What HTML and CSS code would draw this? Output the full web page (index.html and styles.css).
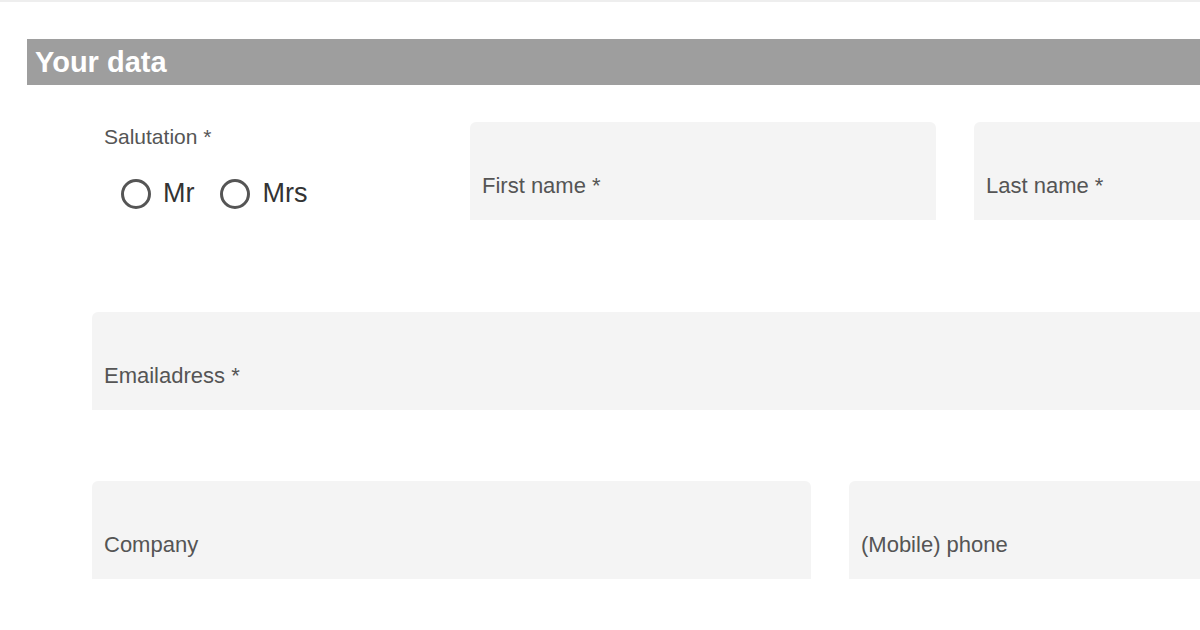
FILE: index.html
```html
<!DOCTYPE html>
<html lang="en">
<head>
    <meta charset="UTF-8">
    <meta name="viewport" content="width=device-width, initial-scale=1.0">
    <title>Your data</title>
    <link rel="stylesheet" href="styles.css">
</head>
<body>
    <div class="topline"></div>

    <section class="data-section">
        <h2 class="section-title">Your data</h2>

        <form class="data-form">
            <div class="row row-names">
                <div class="salutation">
                    <span class="salutation-label">Salutation *</span>
                    <div class="radios">
                        <label class="radio"><span class="radio-dot"></span>Mr</label>
                        <label class="radio"><span class="radio-dot"></span>Mrs</label>
                    </div>
                </div>
                <div class="field field-first">
                    <span class="field-label">First name *</span>
                </div>
                <div class="field field-last">
                    <span class="field-label">Last name *</span>
                </div>
            </div>

            <div class="row row-email">
                <div class="field field-full">
                    <span class="field-label">Emailadress *</span>
                </div>
            </div>

            <div class="row row-contact">
                <div class="field field-half">
                    <span class="field-label">Company</span>
                </div>
                <div class="field field-phone">
                    <span class="field-label">(Mobile) phone</span>
                </div>
            </div>
        </form>
    </section>
</body>
</html>
```

FILE: styles.css
```css
body {
    font-family: 'Liberation Sans', Arial, sans-serif;
    margin: 0;
    padding: 0;
    background: #fff;
    color: #555;
    height: 630px;
    overflow: hidden;
}

.topline {
    height: 2px;
    background-color: #eeeeee;
}

/* the screenshot is cut on the right, so the section runs to the edge */
.data-section {
    padding-top: 37px;
    padding-left: 27px;
}

.section-title {
    margin: 0;
    height: 46px;
    line-height: 46px;
    background-color: #9e9e9e;
    color: #fff;
    font-size: 29px;
    font-weight: bold;
    padding-left: 8px;
}

.data-form {
    margin-left: 65px;
}

.row {
    display: flex;
    gap: 38px;
}

.row-names {
    margin-top: 37px;
}

.row-email {
    margin-top: 92px;
}

.row-contact {
    margin-top: 71px;
}

.salutation {
    width: 340px;
    flex-shrink: 0;
    padding-left: 12px;
    box-sizing: border-box;
}

.salutation-label {
    display: block;
    font-size: 21px;
    line-height: 30px;
}

.radios {
    display: flex;
    gap: 26px;
    margin-top: 26px;
    padding-left: 17px;
}

.radio {
    display: flex;
    align-items: center;
    gap: 12px;
    font-size: 27px;
    color: #333;
}

.radio-dot {
    width: 24px;
    height: 24px;
    border: 3px solid #555;
    border-radius: 50%;
}

.field {
    height: 98px;
    background-color: #f4f4f4;
    border-radius: 6px 6px 0 0;
    box-sizing: border-box;
    padding: 50px 12px 0;
    flex-shrink: 0;
}

.field-label {
    font-size: 22px;
    line-height: 28px;
    color: #555;
}

.field-first {
    width: 466px;
}

.field-last {
    flex: 1;
    border-top-right-radius: 0;
}

.field-full {
    width: 100%;
    border-top-right-radius: 0;
}

.field-half {
    width: 719px;
}

.field-phone {
    flex: 1;
    border-top-right-radius: 0;
}
```
